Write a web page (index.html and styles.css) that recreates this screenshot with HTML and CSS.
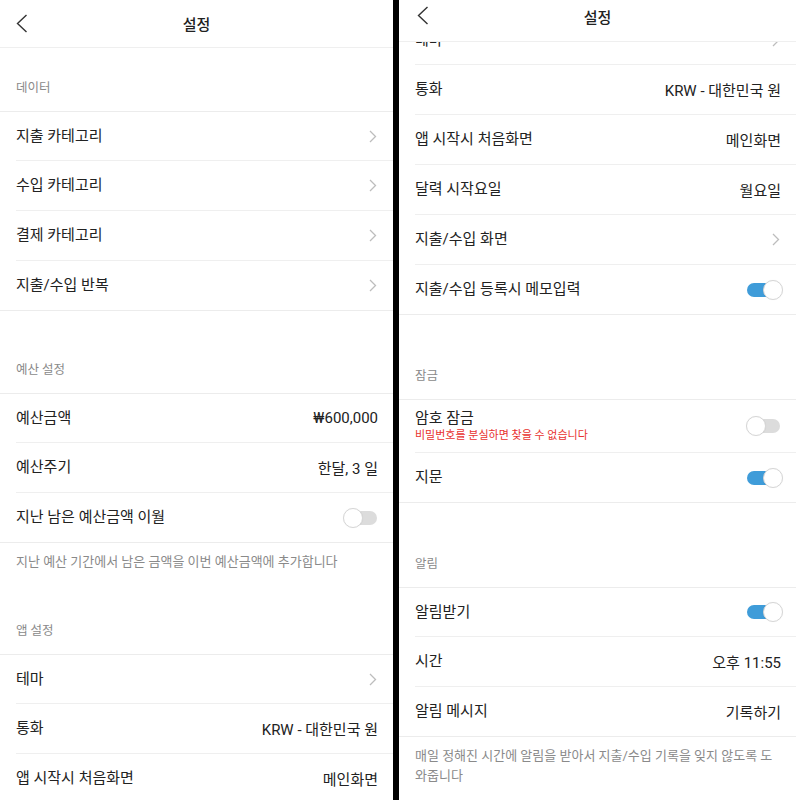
FILE: index.html
```html
<!DOCTYPE html>
<html lang="ko">
<head>
  <meta charset="UTF-8">
  <meta name="viewport" content="width=device-width, initial-scale=1.0">
  <title>설정</title>
  <link rel="stylesheet" href="styles.css">
</head>
<body>
  <div class="screens">
    <!-- left screen: top of settings -->
    <div class="screen screen-left">
      <header class="topbar">
        <svg class="back" width="12" height="19" viewBox="0 0 12 19"><polyline points="10.5,1 1.5,9.5 10.5,18" fill="none" stroke="#333" stroke-width="1.4"/></svg>
        <h1>설정</h1>
      </header>
      <div class="scroll">
        <section class="section">
          <div class="section-title">데이터</div>
          <div class="list">
            <div class="row"><span class="label">지출 카테고리</span><svg class="chev" width="8" height="13" viewBox="0 0 8 13"><polyline points="1,1 6.5,6.5 1,12" fill="none" stroke="#bdbdbd" stroke-width="1.3"/></svg></div>
            <div class="row"><span class="label">수입 카테고리</span><svg class="chev" width="8" height="13" viewBox="0 0 8 13"><polyline points="1,1 6.5,6.5 1,12" fill="none" stroke="#bdbdbd" stroke-width="1.3"/></svg></div>
            <div class="row"><span class="label">결제 카테고리</span><svg class="chev" width="8" height="13" viewBox="0 0 8 13"><polyline points="1,1 6.5,6.5 1,12" fill="none" stroke="#bdbdbd" stroke-width="1.3"/></svg></div>
            <div class="row"><span class="label">지출/수입 반복</span><svg class="chev" width="8" height="13" viewBox="0 0 8 13"><polyline points="1,1 6.5,6.5 1,12" fill="none" stroke="#bdbdbd" stroke-width="1.3"/></svg></div>
          </div>
        </section>

        <section class="section">
          <div class="section-title">예산 설정</div>
          <div class="list">
            <div class="row"><span class="label">예산금액</span><span class="value">₩600,000</span></div>
            <div class="row"><span class="label">예산주기</span><span class="value">한달, 3 일</span></div>
            <div class="row"><span class="label">지난 남은 예산금액 이월</span><span class="toggle"><span class="knob"></span></span></div>
          </div>
          <p class="note">지난 예산 기간에서 남은 금액을 이번 예산금액에 추가합니다</p>
        </section>

        <section class="section">
          <div class="section-title">앱 설정</div>
          <div class="list">
            <div class="row"><span class="label">테마</span><svg class="chev" width="8" height="13" viewBox="0 0 8 13"><polyline points="1,1 6.5,6.5 1,12" fill="none" stroke="#bdbdbd" stroke-width="1.3"/></svg></div>
            <div class="row"><span class="label">통화</span><span class="value">KRW - 대한민국 원</span></div>
            <div class="row"><span class="label">앱 시작시 처음화면</span><span class="value">메인화면</span></div>
          </div>
        </section>
      </div>
    </div>

    <!-- right screen: scrolled further down -->
    <div class="screen screen-right">
      <header class="topbar topbar-short">
        <svg class="back" width="12" height="19" viewBox="0 0 12 19"><polyline points="10.5,1 1.5,9.5 10.5,18" fill="none" stroke="#333" stroke-width="1.4"/></svg>
        <h1>설정</h1>
      </header>
      <div class="scroll">
        <div class="scrolled">
          <section class="section">
            <div class="list list-open">
              <div class="row"><span class="label">테마</span><svg class="chev" width="8" height="13" viewBox="0 0 8 13"><polyline points="1,1 6.5,6.5 1,12" fill="none" stroke="#bdbdbd" stroke-width="1.3"/></svg></div>
              <div class="row"><span class="label">통화</span><span class="value">KRW - 대한민국 원</span></div>
              <div class="row"><span class="label">앱 시작시 처음화면</span><span class="value">메인화면</span></div>
              <div class="row"><span class="label">달력 시작요일</span><span class="value">월요일</span></div>
              <div class="row"><span class="label">지출/수입 화면</span><svg class="chev" width="8" height="13" viewBox="0 0 8 13"><polyline points="1,1 6.5,6.5 1,12" fill="none" stroke="#bdbdbd" stroke-width="1.3"/></svg></div>
              <div class="row"><span class="label">지출/수입 등록시 메모입력</span><span class="toggle on"><span class="knob"></span></span></div>
            </div>
          </section>

          <section class="section">
            <div class="section-title">잠금</div>
            <div class="list">
              <div class="row row-tall">
                <div class="label-stack">
                  <span class="label">암호 잠금</span>
                  <span class="warning">비밀번호를 분실하면 찾을 수 없습니다</span>
                </div>
                <span class="toggle"><span class="knob"></span></span>
              </div>
              <div class="row"><span class="label">지문</span><span class="toggle on"><span class="knob"></span></span></div>
            </div>
          </section>

          <section class="section">
            <div class="section-title">알림</div>
            <div class="list">
              <div class="row"><span class="label">알림받기</span><span class="toggle on"><span class="knob"></span></span></div>
              <div class="row"><span class="label">시간</span><span class="value">오후 11:55</span></div>
              <div class="row"><span class="label">알림 메시지</span><span class="value">기록하기</span></div>
            </div>
            <p class="note">매일 정해진 시간에 알림을 받아서 지출/수입 기록을 잊지 않도록 도와줍니다</p>
          </section>
        </div>
      </div>
    </div>
  </div>
</body>
</html>
```

FILE: styles.css
```css
* {
  box-sizing: border-box;
}

body {
  margin: 0;
  background: #000;
  font-family: Roboto, "Noto Sans CJK KR", sans-serif;
  color: #222;
}

.screens {
  display: flex;
  gap: 6px;
  height: 800px;
}

.screen {
  background: #fff;
  height: 800px;
  overflow: hidden;
  display: flex;
  flex-direction: column;
}

.screen-left {
  width: 393px;
}

.screen-right {
  flex: 1;
}

/* header */
.topbar {
  flex: none;
  height: 48px;
  border-bottom: 1px solid #efefef;
  display: flex;
  align-items: center;
  justify-content: center;
  position: relative;
}

.topbar-short {
  height: 42px;
  padding-bottom: 9px;
}

.topbar h1 {
  margin: 0;
  font-size: 15px;
  font-weight: 500;
  color: #222;
}

.topbar .back {
  position: absolute;
  left: 16px;
  top: 14px;
}

.topbar-short .back {
  left: 18px;
  top: 6px;
}

.scroll {
  flex: 1;
  overflow: hidden;
}

.scrolled {
  margin-top: -26px;
}

/* sections */
.section {
  padding-bottom: 19px;
}

.section-title {
  padding: 31px 16px 14px;
  font-size: 12.5px;
  line-height: 18px;
  color: #8a8a8a;
}

.screen-right .section-title {
  padding-top: 33px;
}

.list {
  border-top: 1px solid #ececec;
  border-bottom: 1px solid #ececec;
}

.list-open {
  border-top: none;
}

.row {
  margin-left: 16px;
  padding-right: 15px;
  height: 48px;
  display: flex;
  align-items: center;
  justify-content: space-between;
}

.row + .row {
  border-top: 1px solid #efefef;
  height: 50px;
}

.row.row-tall {
  height: auto;
  padding-top: 9px;
  padding-bottom: 9px;
}

.label {
  font-size: 15px;
  line-height: 19px;
  color: #222;
}

.value {
  font-size: 15px;
  color: #222;
}

.label-stack {
  display: flex;
  flex-direction: column;
}

.warning {
  font-size: 11px;
  line-height: 15px;
  color: #e8322f;
}

.chev {
  margin-right: 1px;
}

.note {
  margin: 0;
  padding: 9px 14px 0 16px;
  font-size: 13px;
  line-height: 20px;
  color: #8a8a8a;
}

/* switch */
.toggle {
  position: relative;
  width: 37px;
  height: 20px;
  margin-right: -2px;
}

.toggle::before {
  content: "";
  position: absolute;
  left: 1px;
  top: 3px;
  width: 33px;
  height: 14px;
  border-radius: 7px;
  background: #dcdcdc;
}

.toggle.on::before {
  background: #3f9cd9;
}

.knob {
  position: absolute;
  left: 0;
  top: 0;
  width: 20px;
  height: 20px;
  border-radius: 50%;
  background: #fff;
  border: 1px solid #d6d6d6;
  box-shadow: 0 0 1px rgba(0, 0, 0, 0.08);
}

.toggle.on .knob {
  left: 17px;
}
```
